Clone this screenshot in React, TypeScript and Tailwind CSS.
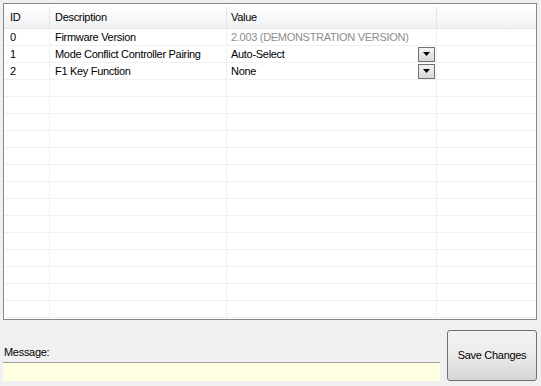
import React from 'react';

const rows = [
  { id: '0', desc: 'Firmware Version', value: '2.003 (DEMONSTRATION VERSION)', readOnly: true },
  { id: '1', desc: 'Mode Conflict Controller Pairing', value: 'Auto-Select', readOnly: false },
  { id: '2', desc: 'F1 Key Function', value: 'None', readOnly: false },
];

const EMPTY_ROWS = 15;

const DropButton: React.FC = () => (
  <div className="w-[17px] h-[15px] border border-[#707070] bg-gradient-to-b from-[#f2f2f2] to-[#d8d8d8] flex items-center justify-center">
    <svg width="7" height="4" viewBox="0 0 7 4">
      <path d="M0 0h7L3.5 4z" fill="#000" />
    </svg>
  </div>
);

export default function App() {
  return (
    <div
      className="w-[541px] h-[386px] bg-[#f0f0f0] text-[11px] tracking-[-0.3px] text-black overflow-hidden"
      style={{ fontFamily: '"Liberation Sans", Arial, sans-serif' }}
    >
      <div className="pt-[3px] pl-[3px] pr-[4px]">
        {/* Grid */}
        <div className="h-[317px] border border-[#828790] bg-white overflow-hidden">
          {/* Header */}
          <div className="flex h-[25px] pt-[3px] border-b border-[#e3e3e3] bg-gradient-to-b from-white to-[#f1f2f4]">
            <div className="w-[46px] border-r border-[#e5e5e5] pl-[6px] flex items-center">ID</div>
            <div className="w-[177px] border-r border-[#e5e5e5] pl-[5px] flex items-center">Description</div>
            <div className="w-[210px] border-r border-[#e5e5e5] pl-[4px] flex items-center">Value</div>
            <div className="flex-1" />
          </div>
          {rows.map((r) => (
            <div key={r.id} className="flex h-[17px] border-b border-[#f0f0f0]">
              <div className="w-[46px] border-r border-[#f0f0f0] pl-[6px] flex items-center">{r.id}</div>
              <div className="w-[177px] border-r border-[#f0f0f0] pl-[5px] flex items-center">{r.desc}</div>
              <div className="w-[210px] border-r border-[#f0f0f0] pl-[4px] pr-[1px] flex items-center justify-between">
                <span className={r.readOnly ? 'text-[#8d8d8d]' : ''}>{r.value}</span>
                {!r.readOnly && <DropButton />}
              </div>
              <div className="flex-1" />
            </div>
          ))}
          {Array.from({ length: EMPTY_ROWS }).map((_, i) => (
            <div key={i} className="flex h-[17px] border-b border-[#f0f0f0]">
              <div className="w-[46px] border-r border-[#f0f0f0]" />
              <div className="w-[177px] border-r border-[#f0f0f0]" />
              <div className="w-[210px] border-r border-[#f0f0f0]" />
              <div className="flex-1" />
            </div>
          ))}
        </div>

        {/* Bottom */}
        <div className="flex items-start mt-[10px]">
          <div className="w-[437px] pt-[15px]">
            <div className="h-[14px] leading-[14px] pl-[1px]">Message:</div>
            <div className="mt-[3px] h-[19px] bg-[#ffffe1] border-t border-[#a0a0a0]" />
          </div>
          <button className="ml-[7px] w-[90px] h-[51px] rounded-[3px] border border-[#707070] bg-gradient-to-b from-[#f2f2f2] via-[#ebebeb] to-[#d5d5d5] text-[11px] tracking-[-0.3px] text-black">
            Save Changes
          </button>
        </div>
      </div>
    </div>
  );
}
